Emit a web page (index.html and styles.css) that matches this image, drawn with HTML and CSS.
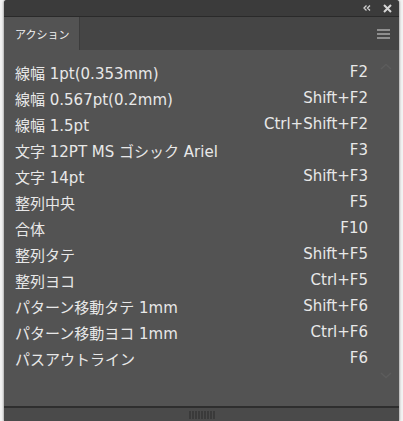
FILE: index.html
```html
<!DOCTYPE html>
<html lang="ja">
<head>
<meta charset="utf-8">
<link rel="stylesheet" href="styles.css">
</head>
<body>
<div class="panel">
  <div class="titlebar">
    <span class="collapse">
      <svg width="8" height="6" viewBox="0 0 8 6"><path d="M3.5 0.5 L1 3 L3.5 5.5 M7 0.5 L4.5 3 L7 5.5" fill="none" stroke="#cfcfcf" stroke-width="1.3"/></svg>
    </span>
    <span class="close">
      <svg width="9" height="9" viewBox="0 0 9 9"><path d="M1 1 L8 8 M8 1 L1 8" stroke="#d6d6d6" stroke-width="2"/></svg>
    </span>
  </div>
  <div class="tabbar">
    <div class="tab">アクション</div>
    <div class="menu">
      <svg width="13" height="10" viewBox="0 0 13 10"><path d="M0 1 H13 M0 5 H13 M0 9 H13" stroke="#a8a8a8" stroke-width="1.6"/></svg>
    </div>
  </div>
  <div class="content">
    <ul class="list">
      <li class="row"><span>線幅 1pt(0.353mm)</span><span>F2</span></li>
      <li class="row"><span>線幅 0.567pt(0.2mm)</span><span>Shift+F2</span></li>
      <li class="row"><span>線幅 1.5pt</span><span>Ctrl+Shift+F2</span></li>
      <li class="row"><span>文字 12PT MS ゴシック Ariel</span><span>F3</span></li>
      <li class="row"><span>文字 14pt</span><span>Shift+F3</span></li>
      <li class="row"><span>整列中央</span><span>F5</span></li>
      <li class="row"><span>合体</span><span>F10</span></li>
      <li class="row"><span>整列タテ</span><span>Shift+F5</span></li>
      <li class="row"><span>整列ヨコ</span><span>Ctrl+F5</span></li>
      <li class="row"><span>パターン移動タテ 1mm</span><span>Shift+F6</span></li>
      <li class="row"><span>パターン移動ヨコ 1mm</span><span>Ctrl+F6</span></li>
      <li class="row"><span>パスアウトライン</span><span>F6</span></li>
    </ul>
    <div class="scroll">
      <svg class="up" width="12" height="7" viewBox="0 0 12 7"><path d="M1 6 L6 1.5 L11 6" fill="none" stroke="#5c5c5c" stroke-width="1.5"/></svg>
      <svg class="down" width="12" height="7" viewBox="0 0 12 7"><path d="M1 1 L6 5.5 L11 1" fill="none" stroke="#5c5c5c" stroke-width="1.5"/></svg>
    </div>
  </div>
  <div class="footer">
    <svg width="26" height="8" viewBox="0 0 26 8"><path d="M1 0V8M4 0V8M7 0V8M10 0V8M13 0V8M16 0V8M19 0V8M22 0V8M25 0V8" stroke="#2a2a2a" stroke-width="1"/></svg>
  </div>
</div>
</body>
</html>
```
FILE: styles.css
```css
html, body {
  margin: 0;
  padding: 0;
  background: #f2f2f2;
}
body {
  width: 403px;
  height: 421px;
  overflow: hidden;
  font-family: "DejaVu Sans", "Noto Sans CJK JP", sans-serif;
}
.panel {
  margin-left: 4px;
  width: 395px;
  height: 421px;
  display: flex;
  flex-direction: column;
  background: #535353;
  border-radius: 3px 3px 0 0;
  box-shadow: -1px 0 2px rgba(0,0,0,0.25), 1px 0 2px rgba(0,0,0,0.25);
  overflow: hidden;
}
.titlebar {
  height: 16px;
  background: #3b3b3b;
  border-bottom: 1px solid #2a2a2a;
  display: flex;
  align-items: center;
  justify-content: flex-end;
  padding-right: 7px;
  gap: 12px;
  flex: none;
}
.collapse, .close {
  display: flex;
  align-items: center;
}
.tabbar {
  height: 33px;
  background: #454545;
  display: flex;
  align-items: stretch;
  justify-content: space-between;
  flex: none;
}
.tab {
  width: 64px;
  background: #535353;
  color: #f0f0f0;
  font-family: "Noto Sans CJK JP", sans-serif;
  font-size: 11px;
  padding-left: 11px;
  display: flex;
  align-items: center;
  border-right: 1px solid #3c3c3c;
}
.menu {
  display: flex;
  align-items: center;
  padding-right: 9px;
}
.content {
  flex: 1;
  display: flex;
  background: #535353;
  border-bottom: 2px solid #2e2e2e;
}
.list {
  list-style: none;
  margin: 0;
  padding: 9px 0 0 11px;
  width: 353px;
}
.row {
  height: 26px;
  display: flex;
  align-items: center;
  justify-content: space-between;
  color: #e8e8e8;
  font-size: 15px;
  white-space: nowrap;
}
.scroll {
  flex: 1;
  display: flex;
  flex-direction: column;
  justify-content: space-between;
  align-items: center;
  padding: 13px 0 27px 4px;
}
.footer {
  height: 11px;
  background: #4a4a4a;
  display: flex;
  justify-content: center;
  align-items: flex-end;
  flex: none;
  padding-bottom: 2px;
}
```
